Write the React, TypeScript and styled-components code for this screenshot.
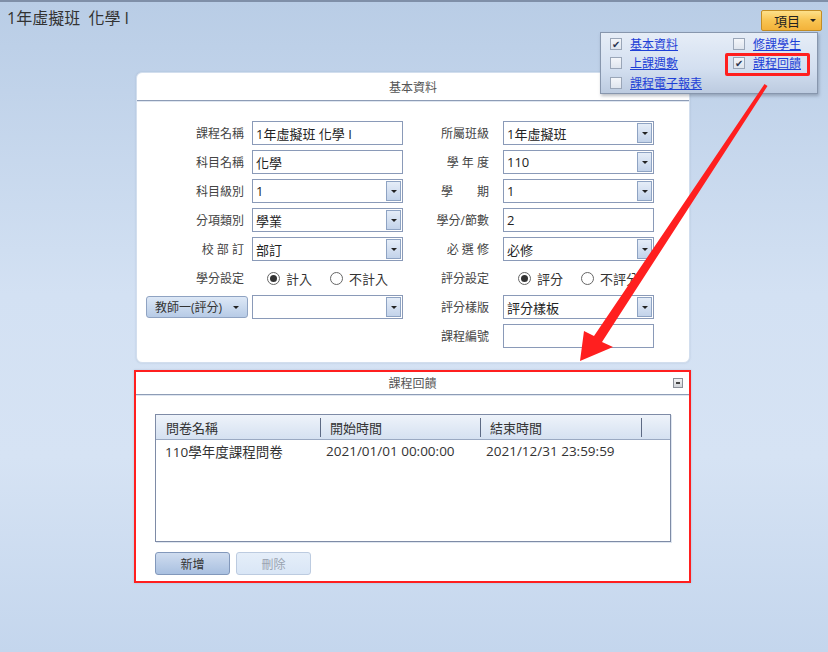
import React from 'react';
import styled, { createGlobalStyle } from 'styled-components';

const GlobalStyle = createGlobalStyle`
  html, body {
    margin: 0;
    padding: 0;
  }
  body {
    font-family: "Open Sans", "Noto Sans CJK TC", sans-serif;
    color: #333;
  }
  * {
    box-sizing: border-box;
  }
`;

//page frame
const Page = styled.div`
  position: relative;
  width: 828px;
  height: 652px;
  overflow: hidden;
  border-top: 2px solid #7f8fa8;
  background: linear-gradient(180deg, #b9cde6 0%, #d3e1f3 45%, #d6e3f4 70%, #c4d6ed 100%);
`;

const TopBar = styled.div`
  height: 70px;
  display: flex;
  justify-content: space-between;
  align-items: flex-start;
  padding: 5px 6px 0 7px;
`;

const Title = styled.div`
  font-size: 16px;
  line-height: 22px;
  color: #333;
`;

const ItemsButton = styled.div`
  margin-top: 3px;
  width: 61px;
  height: 21px;
  display: flex;
  align-items: center;
  justify-content: space-between;
  padding: 0 5px 0 12px;
  font-size: 13px;
  color: #222;
  border: 1px solid #c28d25;
  border-radius: 2px;
  background: linear-gradient(180deg, #fde08a 0%, #f8c452 50%, #f3b23a 100%);
`;

const SmallArrow = styled.span`
  width: 0;
  height: 0;
  border-left: 3px solid transparent;
  border-right: 3px solid transparent;
  border-top: 3px solid #222;
`;

//dropdown menu over the page
const Menu = styled.div`
  position: absolute;
  left: 600px;
  top: 30px;
  width: 218px;
  height: 62px;
  border: 1px solid #8796ad;
  background: linear-gradient(180deg, #e6edf7 0%, #d3dff0 60%, #bccbe0 100%);
  box-shadow: 1px 2px 3px rgba(60, 70, 90, 0.35);
  display: grid;
  grid-template-columns: 123px 1fr;
  grid-auto-rows: 19.5px;
  padding: 1px 0 0 9px;
`;

const MenuItem = styled.div<{ $marked?: boolean }>`
  display: flex;
  align-items: center;
  gap: 8px;
  font-size: 12px;
  position: relative;
  a {
    color: #1d3fd6;
    text-decoration: underline;
  }
  ${(p) =>
    p.$marked &&
    `
    &::after {
      content: '';
      box-sizing: border-box;
      position: absolute;
      left: -8px;
      top: -1px;
      width: 85px;
      height: 23px;
      border: 3px solid #ff1f1f;
      border-radius: 2px;
    }
  `}
`;

const CheckBox = styled.span`
  width: 12px;
  height: 12px;
  border: 1px solid #9aa6b8;
  background: linear-gradient(180deg, #f4f6fa, #dfe5ee);
  display: inline-flex;
  align-items: center;
  justify-content: center;
  font-size: 10px;
  line-height: 1;
  color: #2a3550;
`;

const Panels = styled.div`
  display: flex;
  flex-direction: column;
  gap: 7px;
`;

const Panel = styled.div<{ $highlight?: boolean }>`
  margin-left: ${(p) => (p.$highlight ? '134px' : '136px')};
  width: ${(p) => (p.$highlight ? '557px' : '554px')};
  background: #fff;
  border-radius: ${(p) => (p.$highlight ? '0' : '6px')};
  border: ${(p) => (p.$highlight ? '2px solid #ff1f1f' : '1px solid #d2deee')};
  box-shadow: 0 0 2px rgba(120, 140, 170, 0.35);
`;

const PanelHeader = styled.div<{ $h: number }>`
  position: relative;
  height: ${(p) => p.$h}px;
  display: flex;
  align-items: center;
  justify-content: center;
  font-size: 12px;
  color: #555;
  border-bottom: 1px solid #8d9cb6;
  box-shadow: 0 1px 0 #dfe6f0;
`;

const Collapse = styled.span`
  position: absolute;
  right: 6px;
  top: 6px;
  width: 10px;
  height: 10px;
  border: 1px solid #8a8f98;
  background: linear-gradient(180deg, #f2f2f2, #d0d3d8);
  &::after {
    content: '';
    position: absolute;
    left: 2px;
    top: 3px;
    width: 4px;
    height: 2px;
    background: #444;
  }
`;

//form in 基本資料
const FormBody = styled.div`
  display: flex;
  gap: 30px;
  padding: 20px 0 14px 5px;
`;

const FormColumn = styled.div<{ $label: number }>`
  display: grid;
  grid-template-columns: ${(p) => p.$label}px 151px;
  grid-auto-rows: 24px;
  column-gap: ${(p) => (p.$label > 80 ? 4 : 10)}px;
  row-gap: 5px;
`;

const Label = styled.div`
  display: flex;
  align-items: center;
  justify-content: flex-end;
  padding-right: 4px;
  font-size: 12px;
  color: #444;
  white-space: pre;
`;

const Field = styled.div`
  position: relative;
  border: 1px solid #8a9ab8;
  background: #fff;
  display: flex;
  align-items: center;
  padding-left: 3px;
  font-size: 13px;
  color: #222;
`;

const DropButton = styled.span`
  position: absolute;
  right: 1px;
  top: 1px;
  bottom: 1px;
  width: 15px;
  border: 1px solid #8ea3c3;
  background: linear-gradient(180deg, #e5edf8 0%, #c3d3ea 100%);
  display: flex;
  align-items: center;
  justify-content: center;
  &::after {
    content: '';
    border-left: 3px solid transparent;
    border-right: 3px solid transparent;
    border-top: 3px solid #222;
  }
`;

const RadioGroup = styled.div`
  display: flex;
  align-items: center;
  gap: 6px;
  padding-left: 15px;
  font-size: 13px;
  color: #333;
  span.opt {
    margin-right: 12px;
  }
`;

const Radio = styled.span<{ $on?: boolean }>`
  width: 13px;
  height: 13px;
  border-radius: 50%;
  border: 1px solid #666;
  background: #fff;
  display: inline-flex;
  align-items: center;
  justify-content: center;
  &::after {
    content: '';
    width: 7px;
    height: 7px;
    border-radius: 50%;
    background: ${(p) => (p.$on ? '#333' : 'transparent')};
  }
`;

const TeacherButton = styled.div`
  margin-left: 4px;
  margin-top: 1px;
  height: 22px;
  display: flex;
  align-items: center;
  justify-content: space-between;
  padding: 0 8px 0 8px;
  font-size: 12px;
  color: #333;
  border: 1px solid #8fa3c2;
  border-radius: 3px;
  background: linear-gradient(180deg, #dde8f6 0%, #b7cbe6 100%);
`;

//課程回饋
const FeedbackBody = styled.div`
  padding: 19px 18px 4px 19px;
`;

const Grid = styled.div`
  height: 128px;
  border: 1px solid #7e8ba6;
  box-shadow: 1px 1px 0 #dfe6f0;
`;

const GridHead = styled.div`
  height: 25px;
  display: grid;
  grid-template-columns: 165px 160px 161px 1fr;
  background: linear-gradient(180deg, #eef3fa 0%, #d5e1f1 100%);
  border-bottom: 1px solid #9aa9c2;
`;

const HeadCell = styled.div`
  display: flex;
  align-items: center;
  padding-left: 9px;
  font-size: 13px;
  color: #333;
  border-right: 1px solid #5d6a84;
  margin: 3px 0;
  &:first-child {
    padding-left: 10px;
  }
  &:last-child {
    border-right: none;
  }
`;

const GridRow = styled.div`
  height: 22px;
  display: grid;
  grid-template-columns: 165px 160px 161px 1fr;
  font-size: 13.5px;
  color: #333;
  div {
    display: flex;
    align-items: center;
    padding-left: 5px;
  }
  div:first-child {
    padding-left: 9px;
  }
`;

const ButtonRow = styled.div`
  display: flex;
  gap: 6px;
  margin-top: 10px;
  padding-bottom: 2px;
`;

const ActionButton = styled.div<{ $disabled?: boolean }>`
  width: 75px;
  height: 23px;
  display: flex;
  align-items: center;
  justify-content: center;
  font-size: 12px;
  border-radius: 3px;
  color: ${(p) => (p.$disabled ? '#9aa3b0' : '#333')};
  border: 1px solid ${(p) => (p.$disabled ? '#bccbe0' : '#8298bb')};
  background: ${(p) =>
    p.$disabled
      ? 'linear-gradient(180deg, #e5eef9 0%, #d9e6f6 100%)'
      : 'linear-gradient(180deg, #cfdcef 0%, #a9c0e0 100%)'};
`;

const ArrowLayer = styled.svg`
  position: absolute;
  left: 0;
  top: -2px;
  pointer-events: none;
`;

function Select(props: { value?: string }) {
  return (
    <Field>
      {props.value}
      <DropButton />
    </Field>
  );
}

const leftRows = [
  { label: '課程名稱', value: '1年虛擬班 化學 I', select: false },
  { label: '科目名稱', value: '化學', select: false },
  { label: '科目級別', value: '1', select: true },
  { label: '分項類別', value: '學業', select: true },
  { label: '校 部 訂', value: '部訂', select: true }
];

const rightRows = [
  { label: '所屬班級', value: '1年虛擬班', select: true },
  { label: '學 年 度', value: '110', select: true },
  { label: '學　　期', value: '1', select: true },
  { label: '學分/節數', value: '2', select: false },
  { label: '必 選 修', value: '必修', select: true }
];

export default function App() {
  return (
    <>
      <GlobalStyle />
      <Page>
        <TopBar>
          <Title>1年虛擬班&nbsp;&nbsp;化學 I</Title>
          <ItemsButton>
            <span>項目</span>
            <SmallArrow />
          </ItemsButton>
        </TopBar>

        <Panels>
          <Panel>
            <PanelHeader $h={28}>基本資料</PanelHeader>
            <FormBody>
              <FormColumn $label={106}>
                {leftRows.map((r) => (
                  <React.Fragment key={r.label}>
                    <Label>{r.label}</Label>
                    {r.select ? <Select value={r.value} /> : <Field>{r.value}</Field>}
                  </React.Fragment>
                ))}
                <Label>學分設定</Label>
                <RadioGroup>
                  <Radio $on />
                  <span className="opt">計入</span>
                  <Radio />
                  <span>不計入</span>
                </RadioGroup>
                <TeacherButton>
                  <span>教師一(評分)</span>
                  <SmallArrow />
                </TeacherButton>
                <Select />
              </FormColumn>
              <FormColumn $label={60}>
                {rightRows.map((r) => (
                  <React.Fragment key={r.label}>
                    <Label>{r.label}</Label>
                    {r.select ? <Select value={r.value} /> : <Field>{r.value}</Field>}
                  </React.Fragment>
                ))}
                <Label>評分設定</Label>
                <RadioGroup>
                  <Radio $on />
                  <span className="opt">評分</span>
                  <Radio />
                  <span>不評分</span>
                </RadioGroup>
                <Label>評分樣版</Label>
                <Select value="評分樣板" />
                <Label>課程編號</Label>
                <Field />
              </FormColumn>
            </FormBody>
          </Panel>

          <Panel $highlight>
            <PanelHeader $h={23}>
              課程回饋
              <Collapse />
            </PanelHeader>
            <FeedbackBody>
              <Grid>
                <GridHead>
                  <HeadCell>問卷名稱</HeadCell>
                  <HeadCell>開始時間</HeadCell>
                  <HeadCell>結束時間</HeadCell>
                  <HeadCell />
                </GridHead>
                <GridRow>
                  <div>110學年度課程問卷</div>
                  <div>2021/01/01 00:00:00</div>
                  <div>2021/12/31 23:59:59</div>
                  <div />
                </GridRow>
              </Grid>
              <ButtonRow>
                <ActionButton>新增</ActionButton>
                <ActionButton $disabled>刪除</ActionButton>
              </ButtonRow>
            </FeedbackBody>
          </Panel>
        </Panels>

        <Menu>
          <MenuItem>
            <CheckBox>✔</CheckBox>
            <a>基本資料</a>
          </MenuItem>
          <MenuItem>
            <CheckBox />
            <a>修課學生</a>
          </MenuItem>
          <MenuItem>
            <CheckBox />
            <a>上課週數</a>
          </MenuItem>
          <MenuItem $marked>
            <CheckBox>✔</CheckBox>
            <a>課程回饋</a>
          </MenuItem>
          <MenuItem>
            <CheckBox />
            <a>課程電子報表</a>
          </MenuItem>
        </Menu>

        <ArrowLayer width="828" height="652" viewBox="0 0 828 652">
          <polygon
            points="764.5,84 594,336 584,331 580,361 613,347 602,342 767.5,86"
            fill="#ff1f1f"
          />
        </ArrowLayer>
      </Page>
    </>
  );
}
